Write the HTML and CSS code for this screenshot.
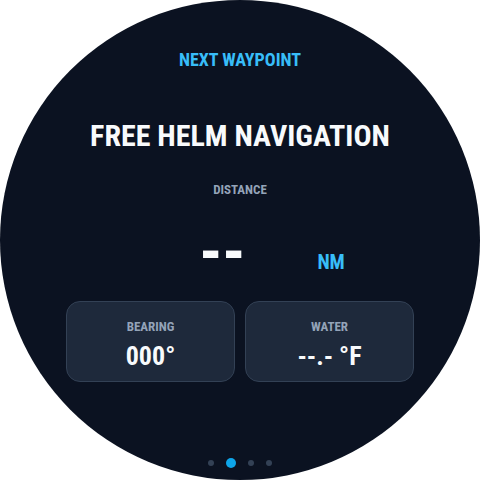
FILE: index.html
```html
<!DOCTYPE html>
<html>
<head>
<meta charset="utf-8">
<link rel="stylesheet" href="styles.css">
</head>
<body>
<div class="watch">
  <div class="eyebrow">NEXT WAYPOINT</div>
  <div class="title">FREE HELM NAVIGATION</div>
  <div class="label dist-label">DISTANCE</div>
  <div class="readout">
    <span class="value">--</span>
    <span class="unit">NM</span>
  </div>
  <div class="cards">
    <div class="card">
      <div class="label">BEARING</div>
      <div class="card-value">000°</div>
    </div>
    <div class="card">
      <div class="label">WATER</div>
      <div class="card-value">--.- °F</div>
    </div>
  </div>
  <div class="dots">
    <span class="dot"></span>
    <span class="dot active"></span>
    <span class="dot"></span>
    <span class="dot"></span>
  </div>
</div>
</body>
</html>
```

FILE: styles.css
```css
html, body {
  margin: 0;
  padding: 0;
  background: #ffffff;
}
.watch {
  width: 480px;
  height: 480px;
  border-radius: 50%;
  background: #0b1221;
  overflow: hidden;
  display: flex;
  flex-direction: column;
  align-items: center;
  font-family: Roboto, "Liberation Sans", sans-serif;
  font-weight: 700;
  font-stretch: 87.5%;
  line-height: 1;
}
.eyebrow {
  margin-top: 51px;
  font-size: 18px;
  color: #38bdf8;
}
.title {
  margin-top: 52px;
  font-size: 30px;
  color: #f8fafc;
}
.label {
  font-size: 13px;
  color: #94a3b8;
}
.dist-label {
  margin-top: 32px;
}
.readout {
  display: flex;
  align-items: flex-start;
  gap: 72px;
  padding-left: 64px;
  margin-top: 25px;
}
.value {
  font-size: 64px;
  color: #f8fafc;
}
.unit {
  margin-top: 31px;
  font-size: 20px;
  color: #38bdf8;
}
.cards {
  display: flex;
  gap: 10px;
  margin-top: 16px;
}
.card {
  width: 169px;
  height: 81px;
  box-sizing: border-box;
  border: 1px solid #334155;
  border-radius: 14px;
  background: #1e293b;
  display: flex;
  flex-direction: column;
  align-items: center;
  justify-content: center;
  gap: 10px;
  padding-top: 6px;
}
.card-value {
  font-size: 26px;
  color: #f8fafc;
}
.dots {
  margin-top: auto;
  margin-bottom: 12px;
  display: flex;
  align-items: center;
  gap: 12px;
}
.dot {
  width: 6px;
  height: 6px;
  border-radius: 50%;
  background: #334155;
}
.dot.active {
  width: 10px;
  height: 10px;
  background: #0ea5e9;
}
```
